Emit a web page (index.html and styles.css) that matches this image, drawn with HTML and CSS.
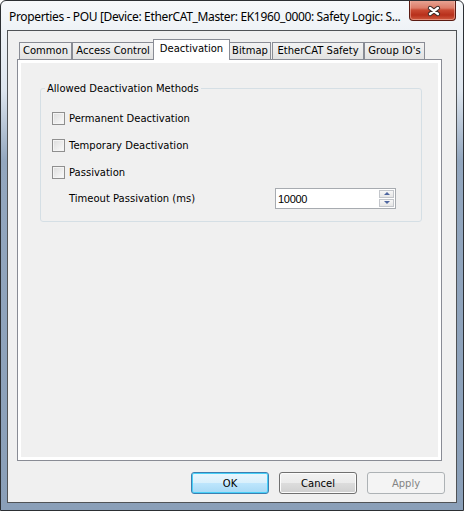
FILE: index.html
```html
<!DOCTYPE html>
<html lang="en">
<head>
    <meta charset="UTF-8">
    <title>Properties - POU</title>
    <link rel="stylesheet" href="styles.css">
</head>
<body>
    <div class="window">
        <div class="titlebar">
            <span class="title">Properties - POU [Device: EtherCAT_Master: EK1960_0000: Safety Logic: S...</span>
            <button class="close" title="Close">
                <svg width="46" height="20" viewBox="0 0 46 20">
                    <path d="M20.5 8 L28.5 14 M28.5 8 L20.5 14" stroke="#3a2a28" stroke-width="4.6" stroke-linecap="round"/>
                    <path d="M20.5 8 L28.5 14 M28.5 8 L20.5 14" stroke="#ffffff" stroke-width="2.6" stroke-linecap="round"/>
                </svg>
            </button>
        </div>
        <div class="client">
            <div class="tabs">
                <div class="tab tab-common">Common</div>
                <div class="tab tab-access">Access Control</div>
                <div class="tab tab-deact active">Deactivation</div>
                <div class="tab tab-bitmap">Bitmap</div>
                <div class="tab tab-safety">EtherCAT Safety</div>
                <div class="tab tab-group">Group IO's</div>
            </div>
            <div class="panel">
                <div class="page">
                    <fieldset class="group">
                        <legend>Allowed Deactivation Methods</legend>
                        <label class="check"><span class="box"></span>Permanent Deactivation</label>
                        <label class="check"><span class="box"></span>Temporary Deactivation</label>
                        <label class="check"><span class="box"></span>Passivation</label>
                        <div class="field-row">
                            <span class="field-label">Timeout Passivation (ms)</span>
                            <div class="spin">
                                <span class="spin-value">10000</span>
                                <span class="spin-buttons">
                                    <span class="spin-btn up"></span>
                                    <span class="spin-btn down"></span>
                                </span>
                            </div>
                        </div>
                    </fieldset>
                </div>
            </div>
            <div class="buttons">
                <button class="btn default">OK</button>
                <button class="btn">Cancel</button>
                <button class="btn" disabled>Apply</button>
            </div>
        </div>
    </div>
</body>
</html>
```

FILE: styles.css
```css
body {
    margin: 0;
    background-color: #fff;
    font-family: "DejaVu Sans", Tahoma, sans-serif;
    font-size: 10px;
    color: #000;
}
.window {
    width: 464px;
    height: 511px;
    box-sizing: border-box;
    border: 1px solid #2c2f33;
    border-radius: 6px 6px 0 0;
    background: linear-gradient(#f7f9fb 0, #eef2f6 30px, #dde5ee 90px, #93a7bf 160px, #8a9fb8 100%);
    display: flex;
    flex-direction: column;
    overflow: hidden;
}
.titlebar {
    height: 29px;
    display: flex;
    align-items: flex-start;
    flex-shrink: 0;
}
.title {
    flex: 1;
    min-width: 0;
    padding: 8px 0 0 8px;
    font-family: "Noto Sans", sans-serif;
    font-size: 12px;
    letter-spacing: -0.35px;
    line-height: 16px;
    white-space: nowrap;
}
.close {
    width: 47px;
    height: 21px;
    margin: -1px 7px 0 0;
    padding: 0;
    border: 1px solid #5a1b12;
    border-top: none;
    border-radius: 0 0 4px 4px;
    background: linear-gradient(#e9a898 0, #dc7c68 40%, #c94a33 50%, #b8301b 75%, #cf5a40 100%);
    box-shadow: inset 0 0 0 1px rgba(255, 210, 200, 0.45);
    display: flex;
    align-items: center;
    justify-content: center;
    flex-shrink: 0;
}
.close svg {
    display: block;
}
.client {
    flex: 1;
    margin: 0 6px 7px 6px;
    border: 1px solid #505356;
    background-color: #f0f0f0;
    padding: 8px 14px 8px 9px;
    display: flex;
    flex-direction: column;
}

/* tab strip */
.tabs {
    height: 20px;
    padding-left: 2px;
    display: flex;
    align-items: flex-end;
    position: relative;
    z-index: 1;
}
.tab {
    height: 17px;
    box-sizing: border-box;
    border: 1px solid #898c95;
    border-bottom: none;
    background: linear-gradient(#f3f3f3, #e2e2e2);
    text-align: center;
    line-height: 16px;
    white-space: nowrap;
}
.tab-common { width: 53px; }
.tab-access { width: 82px; }
.tab-deact { width: 77px; }
.tab-bitmap { width: 42px; }
.tab-safety { width: 92px; margin-left: 1px; }
.tab-group { width: 61px; }
.tab.active {
    height: 21px;
    margin: 0 -1px -1px -1px;
    background: #fff;
    line-height: 17px;
}

.panel {
    flex: 1;
    border: 1px solid #898c95;
    background-color: #fff;
    padding: 3px;
    display: flex;
}
.page {
    flex: 1;
    background-color: #f0f0f0;
}

/* group box */
.group {
    margin: 19px 16px 0 19px;
    padding: 17px 0 12px 11px;
    border: 1px solid #d5dfe5;
    border-radius: 3px;
    display: flex;
    flex-direction: column;
    gap: 14px;
}
.group legend {
    margin-left: -7px;
    padding: 0 2px;
    line-height: 13px;
}
.check {
    display: flex;
    align-items: center;
    height: 13px;
    line-height: 13px;
}
.box {
    width: 13px;
    height: 13px;
    box-sizing: border-box;
    margin-right: 4px;
    border: 1px solid #8f8f8f;
    background: linear-gradient(135deg, #dcdcdc, #fbfbfb);
    box-shadow: inset 0 0 0 1px #f4f4f4;
}
.field-row {
    display: flex;
    align-items: center;
    margin-top: -5px;
    padding-left: 17px;
    height: 21px;
}
.field-label {
    width: 206px;
}
.spin {
    width: 121px;
    height: 21px;
    box-sizing: border-box;
    border: 1px solid #a7abb0;
    background-color: #fff;
    display: flex;
    align-items: center;
    padding: 0 1px 0 2px;
}
.spin-value {
    flex: 1;
    font-family: "Liberation Sans", Arial, sans-serif;
    font-size: 11px;
    letter-spacing: -0.3px;
}
.spin-buttons {
    width: 15px;
    display: flex;
    flex-direction: column;
    gap: 1px;
}
.spin-btn {
    height: 8px;
    box-sizing: border-box;
    border: 1px solid #c3c6cb;
    background: linear-gradient(#f7f7f7, #e6e6e6);
    position: relative;
}
.spin-btn::after {
    content: "";
    position: absolute;
    left: 4px;
    top: 1px;
    border-left: 3px solid transparent;
    border-right: 3px solid transparent;
}
.spin-btn.up::after {
    border-bottom: 3px solid #4f67a0;
}
.spin-btn.down::after {
    border-top: 3px solid #4f67a0;
}

/* dialog buttons */
.buttons {
    display: flex;
    justify-content: flex-end;
    gap: 10px;
    margin-top: 11px;
    margin-right: -3px;
}
.btn {
    width: 78px;
    height: 22px;
    padding: 0;
    border: 1px solid #707070;
    border-radius: 3px;
    background: linear-gradient(#f2f2f2 0, #ebebeb 50%, #dddddd 50%, #cfcfcf 100%);
    box-shadow: inset 0 0 0 1px #fcfcfc;
    font-family: "DejaVu Sans", Tahoma, sans-serif;
    font-size: 10px;
    color: #000;
}
.btn.default {
    border-color: #3c7fb1;
    background: linear-gradient(#eaf6fd 0, #d9f0fc 50%, #bee6fd 50%, #a7d9f5 100%);
    box-shadow: inset 0 0 0 1px #48d0f8;
}
.btn:disabled {
    border-color: #adb2b5;
    background: #f4f4f4;
    box-shadow: none;
    color: #838383;
}
```
